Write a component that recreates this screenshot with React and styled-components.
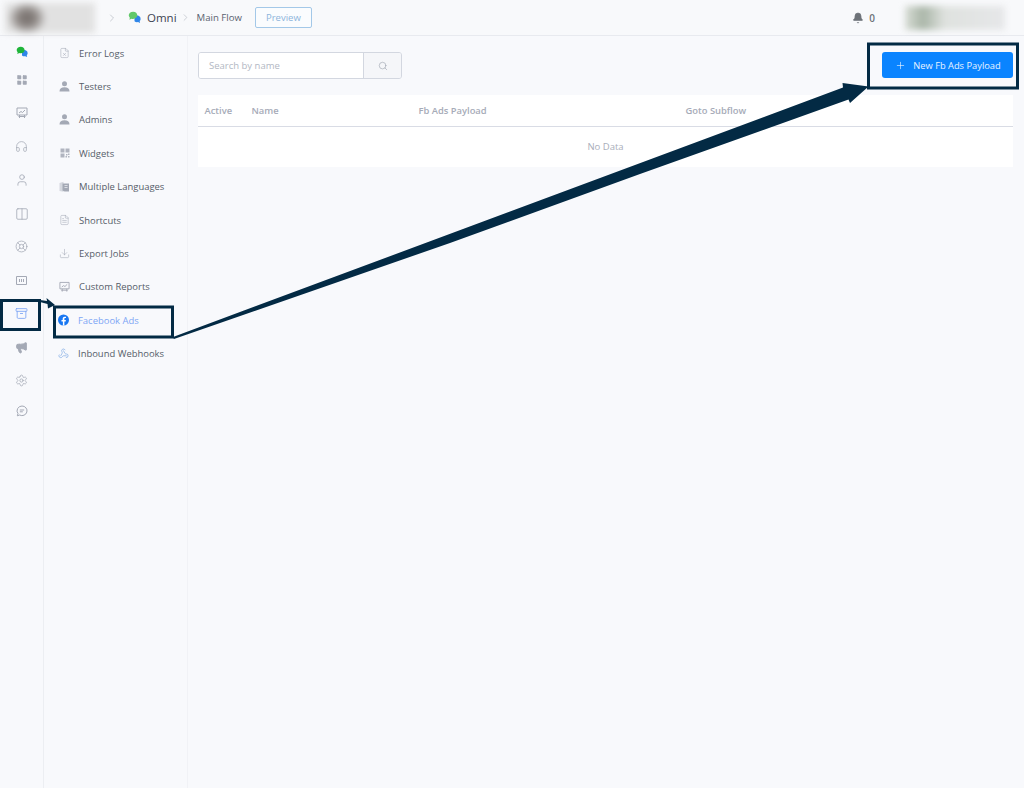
import React from 'react'
import styled, { createGlobalStyle } from 'styled-components'
import { Search, Plus, Bell, ChevronRight, User, Headphones, Columns2, LifeBuoy, Archive, Megaphone, Settings, LayoutGrid, FileX, FileText, Download, Webhook } from 'lucide-react'

const GlobalStyle = createGlobalStyle`
html, body { margin: 0; padding: 0; background: #f8f9fc; }
body { font-family: "Open Sans", "Noto Sans", sans-serif; }
* { box-sizing: border-box; }
`

const Page = styled.div`
position: relative;
width: 1024px;
height: 788px;
overflow: hidden;
background: #f8f9fc;
display: flex;
flex-direction: column;
`

const TopBar = styled.header`
height: 36px;
flex: none;
display: flex;
align-items: center;
background: #f8f9fb;
border-bottom: 1px solid #e8eaef;
padding-left: 5px;
padding-right: 19px;
`
const BlurLogo = styled.div`
width: 90px;
height: 30px;
flex: none;
background: radial-gradient(ellipse 20px 17px at 22px 15px, #736c69 0%, #8d8784 45%, rgba(225, 225, 225, 0.9) 100%), #e6e6e6;
filter: blur(3px);
`
const Crumb = styled.span`
color: ${p => p.$strong ? '#3d4452' : '#5a6270'};
font-size: ${p => p.$strong ? '11.5px' : '9.6px'};
line-height: 16px;
margin-left: ${p => p.$strong ? '6px' : '0'};
`
const CrumbChevron = styled(ChevronRight)`
flex: none;
color: #a9aeb8;
margin-left: ${p => p.$ml}px;
margin-right: ${p => p.$mr}px;
`
const PreviewButton = styled.button`
margin-left: 13px;
width: 57px;
height: 21px;
padding: 0;
background: #fafcfe;
border: 1px solid #a3c8e8;
border-radius: 2px;
color: #8db5dc;
font-family: inherit;
font-size: 9.5px;
`
const BellWrap = styled.div`
margin-left: auto;
display: flex;
align-items: center;
gap: 5px;
color: #6d7278;
font-size: 10px;
font-weight: 600;
`
const BlurUser = styled.div`
margin-left: 30px;
width: 100px;
height: 24px;
background: linear-gradient(90deg, #d8ddd6 0%, #aab6a8 18%, #dfe2df 40%, #e6e7e9 100%);
filter: blur(3px);
`

const Body = styled.div`
flex: 1;
display: flex;
min-height: 0;
`
const Rail = styled.nav`
width: 44px;
flex: none;
display: flex;
flex-direction: column;
align-items: center;
border-right: 1px solid #eceef2;
`
const RailIcon = styled.div`
width: 16px;
height: ${p => p.$h || 33.4}px;
flex: none;
display: flex;
align-items: center;
justify-content: center;
color: ${p => p.$active ? '#7ea6f5' : '#a4a9b5'};
`
const RailLogo = styled.div`
height: 27.3px;
flex: none;
padding-top: 5px;
`
const SubMenu = styled.nav`
width: 144px;
flex: none;
display: flex;
flex-direction: column;
padding-top: 0.5px;
border-right: 1px solid #f1f2f6;
`
const MenuRow = styled.div`
height: 33.4px;
display: flex;
align-items: center;
padding-left: ${p => p.$pl || 15}px;
gap: ${p => p.$gap || 9}px;
color: ${p => p.$active ? '#7ea6f5' : '#565d69'};
font-size: 9.45px;
white-space: nowrap;
`
const MenuIcon = styled.span`
width: 11px;
height: 14px;
flex: none;
display: flex;
align-items: center;
justify-content: center;
color: ${p => p.$blue ? '#6d9fe0' : '#a4a9b5'};
`

const Main = styled.main`
flex: 1;
padding: 16px 11px 0 10px;
`
const Toolbar = styled.div`
display: flex;
justify-content: space-between;
height: 27px;
`
const SearchGroup = styled.div`
display: flex;
width: 204px;
height: 27px;
border: 1px solid #d3d7e0;
border-radius: 3px;
overflow: hidden;
`
const SearchInput = styled.div`
flex: 1;
background: #fff;
display: flex;
align-items: center;
padding-left: 10px;
color: #b2b7c3;
font-size: 9.5px;
`
const SearchButton = styled.div`
width: 38px;
display: flex;
align-items: center;
justify-content: center;
background: #f5f6f9;
border-left: 1px solid #d3d7e0;
color: #9aa0ac;
`
const PrimaryButton = styled.button`
width: 131px;
height: 26px;
padding: 0 0 0 1px;
border: 0;
border-radius: 3px;
background: #0a84ff;
color: #e9f3ff;
font-family: inherit;
font-size: 9.3px;
font-weight: 500;
display: flex;
align-items: center;
justify-content: center;
gap: 7px;
`
const Table = styled.div`
margin-top: 16px;
background: #fff;
`
const HeadRow = styled.div`
height: 32px;
display: grid;
grid-template-columns: 47px 167px 267px 1fr;
align-items: center;
padding-left: 6.5px;
border-bottom: 1px solid #d9dce5;
color: #a6abb8;
font-size: 9.4px;
font-weight: 600;
`
const EmptyRow = styled.div`
height: 40px;
padding-bottom: 2px;
display: flex;
align-items: center;
justify-content: center;
color: #a9aeba;
font-size: 9.5px;
`

// annotation drawn over the page
const Overlay = styled.svg`
position: absolute;
left: 0;
top: 0;
pointer-events: none;
`

const ChatLogo = ({ size = 12 }) => (
    <svg width={size} height={size} viewBox="0 0 14 14">
        <path d="M7 5.500a4 3.600 0 0 1 6.600 3 3.600 3.600 0 0 1-1 2.400l.4 2-2.200-1A4 4 0 0 1 7 11z" fill="#2f86e8" />
        <path d="M5.500.8C8.300.8 10 2.500 10 4.700S8 8.600 5.500 8.600c-.6 0-1.200-.1-1.700-.3L1.500 9.300l.5-2A3.800 3.800 0 0 1 .8 4.700C.8 2.500 2.800.8 5.500.8z" fill={size > 12 ? '#62c96a' : '#1fb53a'} />
    </svg>
)

const FacebookIcon = () => (
    <svg width="12" height="12" viewBox="0 0 24 24">
        <circle cx="12" cy="12" r="12" fill="#1877f2" />
        <path d="M16.700 15.500l.5-3.500h-3.300V9.800c0-1 .5-1.900 2-1.900h1.500v-3s-1.400-.2-2.700-.2c-2.700 0-4.500 1.700-4.500 4.600V12H7.600v3.500h3.100V24h3.200v-8.500z" fill="#fff" />
    </svg>
)

const PersonSolid = () => (
    <svg width="11" height="11" viewBox="0 0 11 11" fill="#a4a9b5">
        <circle cx="5.500" cy="2.800" r="2.500" />
        <path d="M.5 10.500c0-3 2-4.200 5-4.200s5 1.200 5 4.200z" />
    </svg>
)

const BoardChart = () => (
    <svg width="12" height="12" viewBox="0 0 12 12" fill="none" stroke="currentColor" strokeWidth="1">
        <path d="M1 1h10v7H1z" />
        <path d="M3 6l2-1.500 1.500 1L9 3" />
        <path d="M3.500 8v3M8.500 8v3M2.500 9.500h7" />
    </svg>
)

const WidgetBox = () => (
    <svg width="11" height="11" viewBox="0 0 11 11" fill="none" stroke="currentColor" strokeWidth="1">
        <path d="M.5 1.500h10v8H.5z" />
        <path d="M3.500 4v3M5.500 4v3M7.500 4v3" />
    </svg>
)

const QrBlock = () => (
    <svg width="10" height="10" viewBox="0 0 10 10" fill="currentColor" opacity=".85">
        <path d="M.5.5h4v4h-4zM5.500.5h4v4h-4zM.5 5.500h4v4h-4z" />
        <path d="M6 6h1.500v1.500H6zM8 8h1.500v1.500H8zM8 5.500h1.500V7H8zM5.500 8H7v1.500H5.500z" />
    </svg>
)

const BookPages = () => (
    <svg width="11" height="12" viewBox="0 0 11 12">
        <path d="M.5 2l4-1.200v10L.5 10z" fill="#d5d8df" />
        <path d="M3.500 2.500h6.500v8H5.500l-2-1z" fill="#a4a9b5" />
        <path d="M5.500 4.500h3M5.500 6.500h3" stroke="#e8eaef" strokeWidth=".8" />
    </svg>
)

const ChatLine = () => (
    <svg width="12" height="12" viewBox="0 0 12 12" fill="none" stroke="currentColor" strokeWidth="1">
        <path d="M6 1a5 4.800 0 1 1-2.400 9L1.300 10.800 2 8.600A5 4.800 0 0 1 6 1z" />
        <path d="M3.800 5h4.400M3.800 6.800h3" />
    </svg>
)

const railIcons = [
    { el: <LayoutGrid size={12} fill="currentColor" strokeWidth={1} /> },
    { el: <BoardChart /> },
    { el: <Headphones size={13} strokeWidth={1.4} /> },
    { el: <User size={14} strokeWidth={1.4} /> },
    { el: <Columns2 size={14} strokeWidth={1.4} /> },
    { el: <LifeBuoy size={13} strokeWidth={1.4} /> },
    { el: <WidgetBox /> },
    { el: <Archive size={13} strokeWidth={1.6} />, active: true },
    { el: <Megaphone size={13} strokeWidth={1.8} fill="currentColor" /> },
    { el: <Settings size={13} strokeWidth={1.4} /> },
    { el: <ChatLine />, h: 27 },
]

const menu = [
    { label: 'Error Logs', icon: <FileX size={14} strokeWidth={1.2} /> },
    { label: 'Testers', icon: <PersonSolid /> },
    { label: 'Admins', icon: <PersonSolid /> },
    { label: 'Widgets', icon: <QrBlock /> },
    { label: 'Multiple Languages', icon: <BookPages /> },
    { label: 'Shortcuts', icon: <FileText size={14} strokeWidth={1.2} /> },
    { label: 'Export Jobs', icon: <Download size={13} strokeWidth={1.2} /> },
    { label: 'Custom Reports', icon: <BoardChart /> },
    { label: 'Facebook Ads', icon: <FacebookIcon />, active: true, pl: 14 },
    { label: 'Inbound Webhooks', icon: <Webhook size={13} strokeWidth={1.3} />, blue: true, pl: 14 },
]

export default function App() {
    return (
        <Page>
            <GlobalStyle />
            <TopBar>
                <BlurLogo />
                <CrumbChevron size={12} strokeWidth={1.2} $ml={11} $mr={10} />
                <ChatLogo size={13} />
                <Crumb $strong>Omni</Crumb>
                <CrumbChevron size={11} strokeWidth={1.2} $ml={3} $mr={6} />
                <Crumb>Main Flow</Crumb>
                <PreviewButton>Preview</PreviewButton>
                <BellWrap>
                    <Bell size={12} fill="currentColor" strokeWidth={1.2} />
                    0
                </BellWrap>
                <BlurUser />
            </TopBar>
            <Body>
                <Rail>
                    <RailLogo><ChatLogo /></RailLogo>
                    {railIcons.map((r, i) => (
                        <RailIcon key={i} $active={r.active} $h={r.h}>{r.el}</RailIcon>
                    ))}
                </Rail>
                <SubMenu>
                    {menu.map(m => (
                        <MenuRow key={m.label} $active={m.active} $pl={m.pl}>
                            <MenuIcon $blue={m.blue}>{m.icon}</MenuIcon>
                            {m.label}
                        </MenuRow>
                    ))}
                </SubMenu>
                <Main>
                    <Toolbar>
                        <SearchGroup>
                            <SearchInput>Search by name</SearchInput>
                            <SearchButton><Search size={10} strokeWidth={1.4} /></SearchButton>
                        </SearchGroup>
                        <PrimaryButton><Plus size={11} strokeWidth={1.4} />New Fb Ads Payload</PrimaryButton>
                    </Toolbar>
                    <Table>
                        <HeadRow>
                            <span>Active</span>
                            <span>Name</span>
                            <span>Fb Ads Payload</span>
                            <span>Goto Subflow</span>
                        </HeadRow>
                        <EmptyRow>No Data</EmptyRow>
                    </Table>
                </Main>
            </Body>
            <Overlay width="1024" height="788" viewBox="0 0 1024 788">
                <g fill="none" stroke="#032a44" strokeWidth="3">
                    <rect x="1.500" y="300.500" width="38" height="29" />
                    <rect x="54.500" y="307" width="118" height="30" />
                    <rect x="868.500" y="44" width="149" height="44" />
                </g>
                <g fill="#032a44">
                    <path d="M40 300L47 301 46.500 298 55 305 48 308.500 47.500 304 40 302z" />
                    <path d="M173 337L843 87.500 842.500 83 868.500 86.500 850 103 848.500 99.500 640 174 450 243 174 339z" />
                </g>
            </Overlay>
        </Page>
    )
}
